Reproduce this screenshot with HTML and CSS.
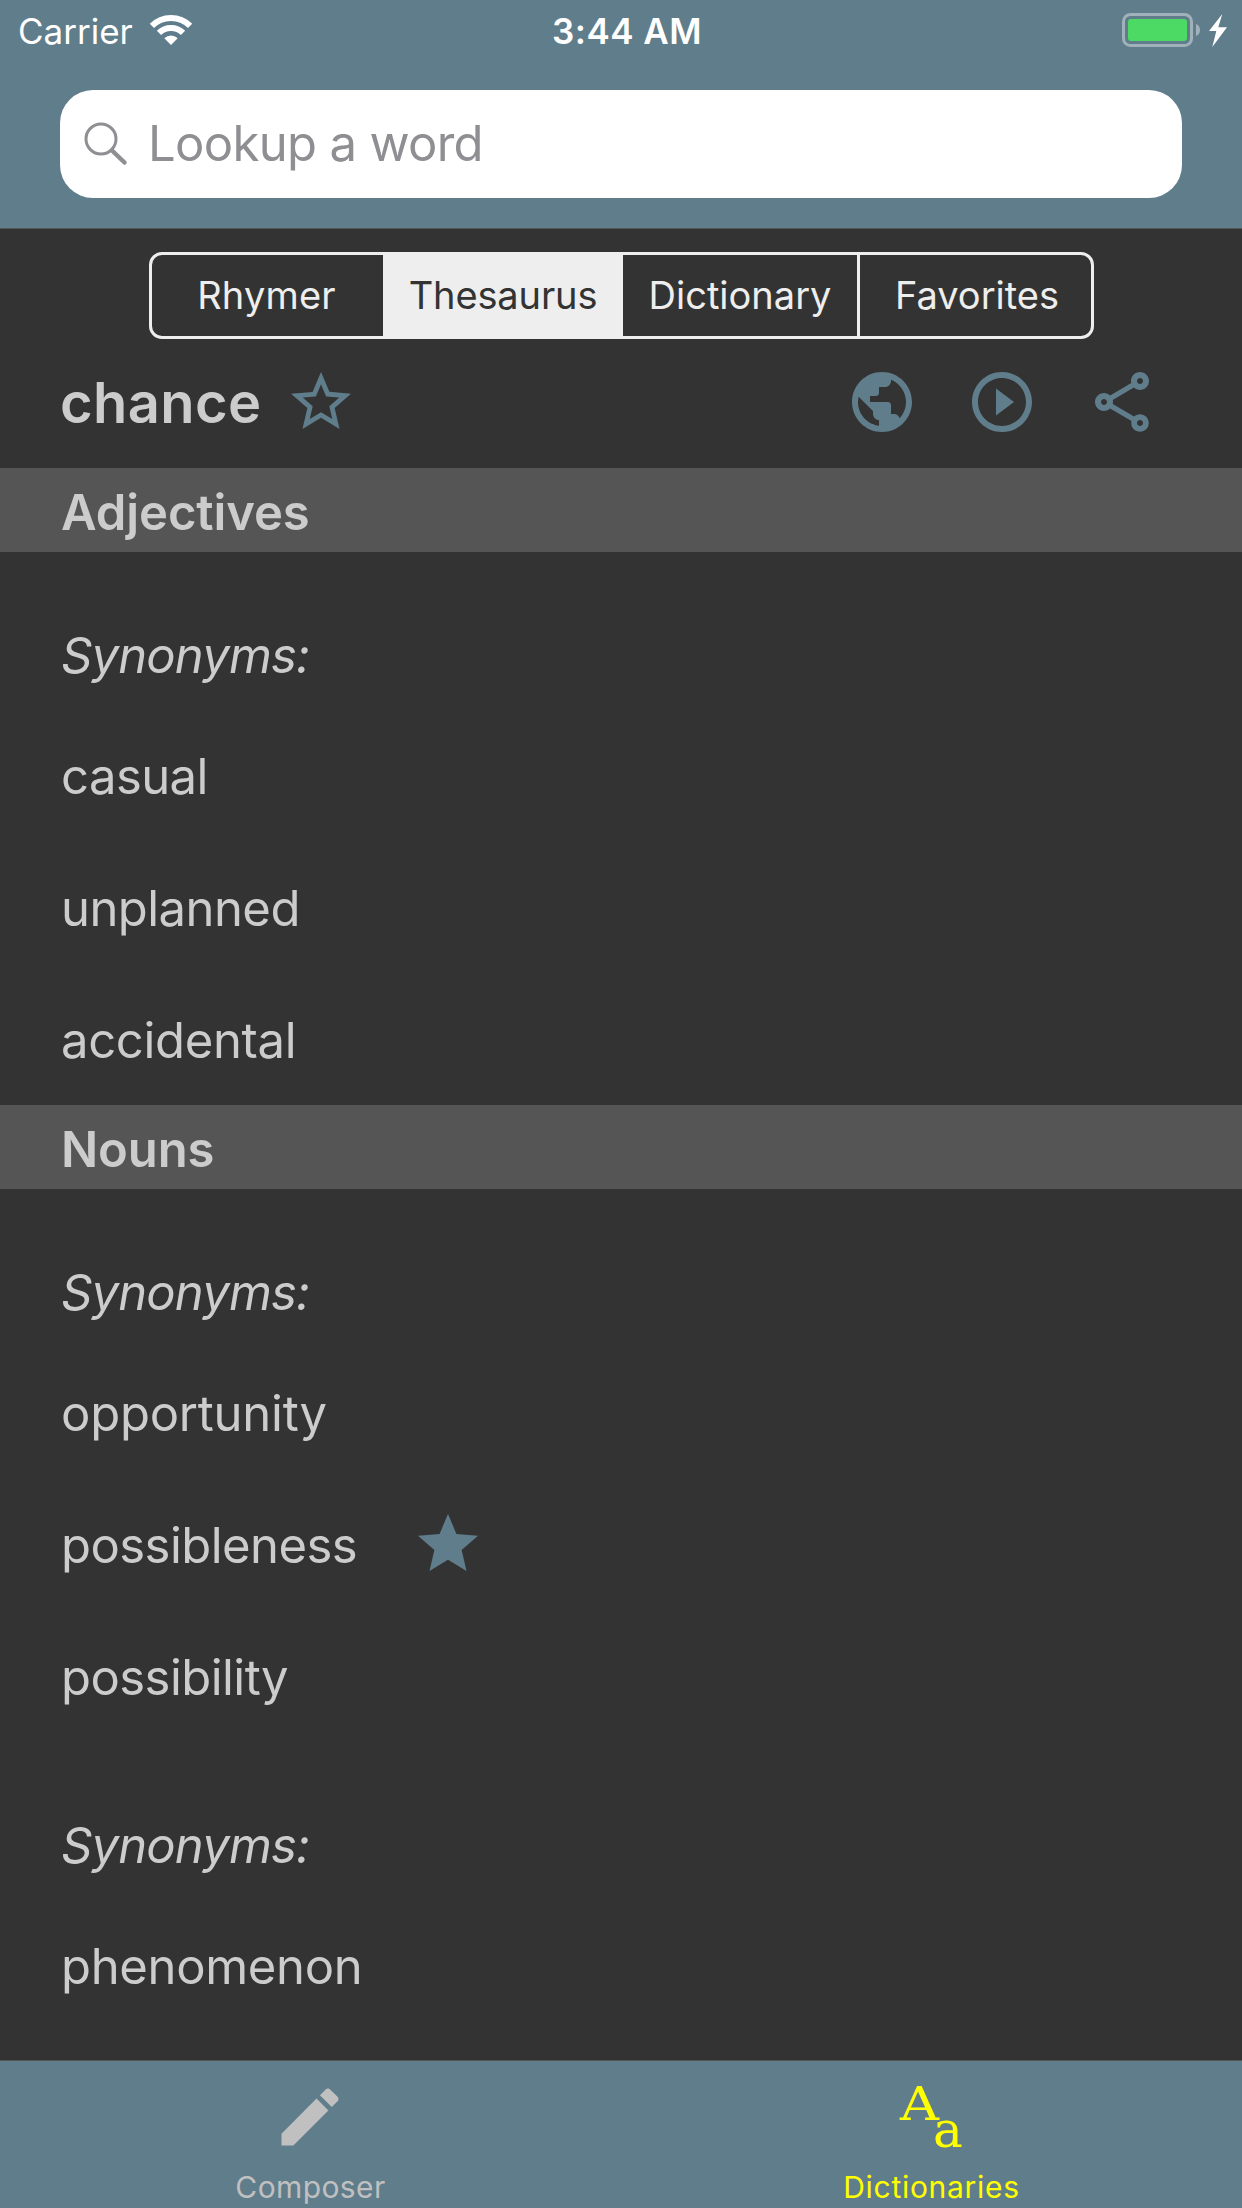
FILE: index.html
```html
<!DOCTYPE html>
<html lang="en">
<head>
<meta charset="utf-8">
<title>Thesaurus</title>
<link rel="stylesheet" href="styles.css">
</head>
<body>
<div class="screen">
  <header class="header">
    <div class="status">
      <div class="status-left">
        <span class="carrier">Carrier</span>
        <svg class="wifi" viewBox="0 0 44 32" aria-hidden="true">
          <path d="M2.9 11.9A27 27 0 0 1 41.1 11.9M9.98 18.98A17 17 0 0 1 34.02 18.98" fill="none" stroke="#fff" stroke-width="6"/>
          <path d="M22 31l-6.7-6.7A9.5 9.5 0 0 1 28.7 24.3z" fill="#fff"/>
        </svg>
      </div>
      <span class="time">3:44 AM</span>
      <div class="status-right">
        <svg class="battery" viewBox="0 0 106 34" aria-hidden="true">
          <rect x="1.5" y="1.5" width="68" height="31" rx="7" fill="none" stroke="#a0b1ba" stroke-width="3"/>
          <rect x="6" y="6" width="59" height="22" rx="3" fill="#4cd964"/>
          <path d="M74 11c5.3 1.5 5.3 10.500 0 12z" fill="#a0b1ba"/>
          <path d="M100.300 1L87 18h7.300l-4 16L105 14.300h-8.700z" fill="#fff"/>
        </svg>
      </div>
    </div>
    <div class="search">
      <svg class="search-icon" viewBox="0 0 44 44" aria-hidden="true">
        <circle cx="17" cy="17" r="15" fill="none" stroke="#8e8e93" stroke-width="3"/>
        <path d="M28 28.500L40.500 40.500" stroke="#8e8e93" stroke-width="4.500" stroke-linecap="round"/>
      </svg>
      <span class="placeholder">Lookup a word</span>
    </div>
  </header>

  <main class="content">
    <nav class="segments">
      <span class="segment">Rhymer</span>
      <span class="segment selected">Thesaurus</span>
      <span class="segment">Dictionary</span>
      <span class="segment">Favorites</span>
    </nav>

    <div class="word-row">
      <h1 class="word">chance</h1>
      <svg class="icon" viewBox="0 0 24 24"><path d="M22 9.240l-7.190-.620L12 2 9.190 8.630 2 9.240l5.460 4.730L5.820 21 12 17.270 18.180 21l-1.630-7.030L22 9.240zM12 15.400l-3.760 2.270 1-4.280-3.320-2.880 4.380-.380L12 6.100l1.710 4.040 4.380.380-3.320 2.880 1 4.280L12 15.400z"/></svg>
      <div class="actions">
        <svg class="icon" viewBox="0 0 24 24"><path d="M12 2C6.480 2 2 6.480 2 12s4.480 10 10 10 10-4.480 10-10S17.520 2 12 2zm-1 17.930c-3.950-.490-7-3.850-7-7.930 0-.620.080-1.210.210-1.790L9 15v1c0 1.100.900 2 2 2v1.930zm6.900-2.540c-.260-.810-1-1.390-1.900-1.390h-1v-3c0-.550-.450-1-1-1H8v-2h2c.550 0 1-.450 1-1V7h2c1.100 0 2-.900 2-2v-.410c2.930 1.190 5 4.060 5 7.410 0 2.080-.800 3.970-2.100 5.390z"/></svg>
        <svg class="icon" viewBox="0 0 24 24"><path d="M10 16.500l6-4.500-6-4.500v9zM12 2C6.480 2 2 6.480 2 12s4.480 10 10 10 10-4.480 10-10S17.520 2 12 2zm0 18c-4.410 0-8-3.590-8-8s3.590-8 8-8 8 3.590 8 8-3.590 8-8 8z"/></svg>
        <svg class="icon" viewBox="0 0 24 24"><path d="M18 16.080c-.760 0-1.440.300-1.960.770L8.910 12.700c.050-.230.090-.460.090-.700s-.040-.470-.090-.700l7.050-4.110c.540.500 1.250.810 2.040.810 1.660 0 3-1.340 3-3s-1.340-3-3-3-3 1.340-3 3c0 .240.040.470.090.700L8.040 9.810C7.500 9.310 6.790 9 6 9c-1.660 0-3 1.340-3 3s1.340 3 3 3c.790 0 1.500-.310 2.040-.810l7.120 4.160c-.050.210-.080.430-.080.650 0 1.610 1.310 2.920 2.920 2.920s2.920-1.310 2.920-2.920c0-1.610-1.310-2.920-2.920-2.920zM18 4c.550 0 1 .450 1 1s-.450 1-1 1-1-.450-1-1 .450-1 1-1zM6 13c-.550 0-1-.450-1-1s.450-1 1-1 1 .450 1 1-.450 1-1 1zm12 7.020c-.550 0-1-.450-1-1s.450-1 1-1 1 .450 1 1-.450 1-1 1z"/></svg>
      </div>
    </div>

    <h2 class="section">Adjectives</h2>
    <h3 class="relation">Synonyms:</h3>
    <div class="entry">casual</div>
    <div class="entry">unplanned</div>
    <div class="entry accidental">accidental</div>

    <h2 class="section">Nouns</h2>
    <h3 class="relation">Synonyms:</h3>
    <div class="entry opportunity">opportunity</div>
    <div class="entry"><span>possibleness</span>
      <svg class="icon" viewBox="0 0 24 24"><path d="M12 17.270L18.180 21l-1.640-7.030L22 9.240l-7.190-.610L12 2 9.190 8.630 2 9.240l5.460 4.730L5.820 21z"/></svg>
    </div>
    <div class="entry">possibility</div>
    <h3 class="relation">Synonyms:</h3>
    <div class="entry phenomenon">phenomenon</div>
  </main>

  <footer class="tabs">
    <div class="tab">
      <svg class="tab-icon" viewBox="0 0 24 24" fill="#c0c0c0"><path d="M3 17.250V21h3.750L17.810 9.940l-3.750-3.750L3 17.250zM20.710 7.040c.390-.390.390-1.020 0-1.410l-2.340-2.340c-.390-.390-1.020-.390-1.410 0l-1.830 1.830 3.750 3.750 1.830-1.830z"/></svg>
      <span class="tab-label">Composer</span>
    </div>
    <div class="tab active">
      <svg class="tab-icon" viewBox="0 0 76 76" fill="#ff0">
        <text class="letter" x="7" y="40.500" font-size="47" textLength="39" lengthAdjust="spacingAndGlyphs">A</text>
        <text class="letter" x="40" y="68" font-size="50">a</text>
      </svg>
      <span class="tab-label">Dictionaries</span>
    </div>
  </footer>
</div>
</body>
</html>
```
FILE: styles.css
```css
* { box-sizing: border-box; }

body {
  margin: 0;
  background: #333;
  font-family: Inter, "Liberation Sans", sans-serif;
  color: #ccc;
}

h1, h2, h3 { margin: 0; }
svg { display: block; flex: none; overflow: visible; }

.screen {
  display: flex;
  flex-direction: column;
  width: 1242px;
  height: 2208px;
  overflow: hidden;
}

/* Status bar and search */
.header {
  height: 229px;
  background: #607d8b;
  border-bottom: 1px solid #555;
}

.status {
  display: grid;
  grid-template-columns: 1fr auto 1fr;
  height: 62px;
  padding: 0 6px 0 18px;
  color: #fff;
  font-size: 35px;
  line-height: 62px;
}

.status-left { display: flex; gap: 16px; }
.wifi { width: 44px; height: 32px; margin-top: 14px; }
.time { font-weight: 600; letter-spacing: 0.45px; }
.status-right { display: flex; justify-content: flex-end; padding: 13px 8px 0 0; }
.battery { width: 106px; height: 34px; }

.search {
  display: flex;
  align-items: center;
  height: 108px;
  margin: 28px 60px 0;
  padding: 0 24px;
  border-radius: 33px;
  background: #fff;
}

.search-icon { width: 44px; height: 44px; }

.placeholder {
  margin-left: 20px;
  padding-bottom: 2px;
  color: #8e8e93;
  font-size: 49px;
  letter-spacing: -0.67px;
}

/* Segmented control */
.content { flex: 1; }

.segments {
  display: grid;
  grid-template-columns: 231px 240px 234px 234px;
  width: 945px;
  height: 87px;
  margin: 23px 0 0 149px;
  border: 3px solid #eee;
  border-radius: 13px;
}

.segment {
  color: #eee;
  font-size: 38px;
  line-height: 81px;
  text-align: center;
}

.segment:first-child { padding-right: 2px; letter-spacing: 0.2px; }
.segment.selected { background: #eee; color: #333; letter-spacing: -0.14px; }
.segment:last-child { padding-left: 3px; border-left: 3px solid #eee; }

/* Current word */
.word-row {
  display: flex;
  align-items: center;
  gap: 24px;
  height: 129px;
  padding: 0 84px 3px 60px;
}

.word { padding-top: 2px; font-size: 56px; font-weight: 600; letter-spacing: 0.4px; }
.icon { width: 72px; height: 72px; fill: #607d8b; }
.actions { display: flex; gap: 48px; margin-left: auto; }

/* Results */
.section {
  height: 84px;
  padding: 5px 61px 0;
  background: #555;
  font-size: 49px;
  font-weight: 600;
  line-height: 80px;
  letter-spacing: -0.1px;
}

.relation {
  height: 157px;
  padding: 50px 61px 0;
  font-size: 49px;
  font-style: italic;
  font-weight: 400;
  line-height: 107px;
  letter-spacing: -0.86px;
}

.entry {
  display: flex;
  align-items: center;
  gap: 55px;
  height: 132px;
  padding: 3px 61px 0;
  font-size: 49px;
  line-height: 60px;
  letter-spacing: -0.55px;
}

.entry .icon { margin-top: -3px; }

.entry.accidental,
.entry.phenomenon { letter-spacing: -0.33px; }
.entry.opportunity { letter-spacing: -0.24px; }

/* Tab bar */
.tabs {
  display: grid;
  grid-template-columns: 1fr 1fr;
  height: 148px;
  background: #607d8b;
  border-top: 1px solid #555;
  color: #c0c0c0;
}

.tab {
  display: flex;
  flex-direction: column;
  align-items: center;
  padding-top: 18px;
}

.tab-icon { width: 76px; height: 76px; margin-right: 2px; }

.tab-label {
  margin-top: 14px;
  font-size: 30px;
  line-height: 36px;
  letter-spacing: 0.4px;
}

.tab.active { color: #ff0; }
.tab.active .tab-label { letter-spacing: 0.7px; }
.letter { font-family: "DejaVu Serif", serif; }
```
